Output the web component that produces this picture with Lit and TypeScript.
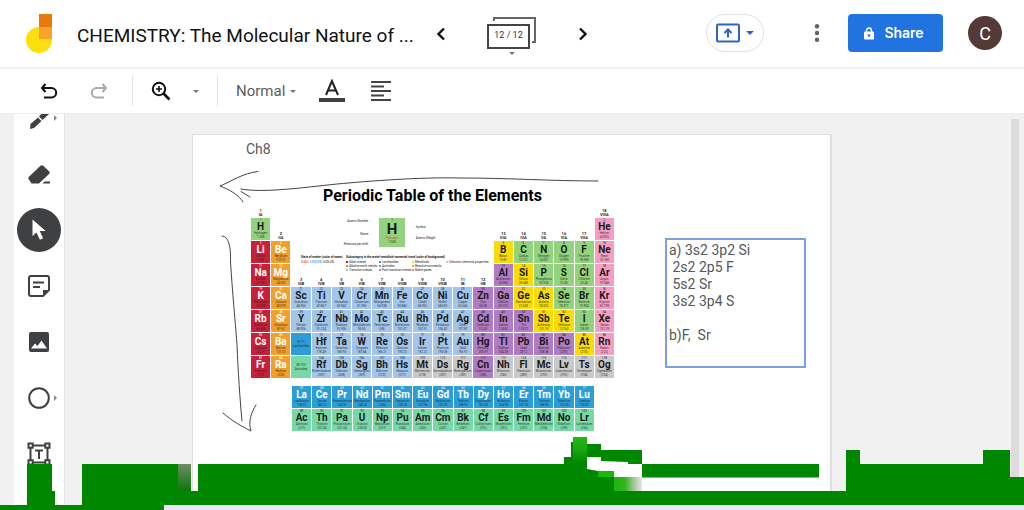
import { LitElement, html, css, svg, nothing } from "lit";
import { customElement } from "lit/decorators.js";

type El = { n: number; s: string; name: string; mass: string; cat: string };

// symbol,name,mass,category in order of atomic number
const DATA = `H,Hydrogen,1.008,n|He,Helium,4.0026,g|Li,Lithium,6.94,r|Be,Beryllium,9.0122,o|B,Boron,10.81,y|C,Carbon,12.011,n|N,Nitrogen,14.007,n|O,Oxygen,15.999,n|F,Fluorine,18.998,n|Ne,Neon,20.180,g|Na,Sodium,22.990,r|Mg,Magnesium,24.305,o|Al,Aluminium,26.982,p|Si,Silicon,28.085,y|P,Phosphorus,30.974,n|S,Sulfur,32.06,n|Cl,Chlorine,35.45,n|Ar,Argon,39.948,g|K,Potassium,39.098,r|Ca,Calcium,40.078,o|Sc,Scandium,44.956,t|Ti,Titanium,47.867,t|V,Vanadium,50.942,t|Cr,Chromium,51.996,t|Mn,Manganese,54.938,t|Fe,Iron,55.845,t|Co,Cobalt,58.933,t|Ni,Nickel,58.693,t|Cu,Copper,63.546,t|Zn,Zinc,65.38,p|Ga,Gallium,69.723,p|Ge,Germanium,72.630,y|As,Arsenic,74.922,y|Se,Selenium,78.971,n|Br,Bromine,79.904,n|Kr,Krypton,83.798,g|Rb,Rubidium,85.468,r|Sr,Strontium,87.62,o|Y,Yttrium,88.906,t|Zr,Zirconium,91.224,t|Nb,Niobium,92.906,t|Mo,Molybdenum,95.95,t|Tc,Technetium,(98),t|Ru,Ruthenium,101.07,t|Rh,Rhodium,102.91,t|Pd,Palladium,106.42,t|Ag,Silver,107.87,t|Cd,Cadmium,112.41,p|In,Indium,114.82,p|Sn,Tin,118.71,p|Sb,Antimony,121.76,y|Te,Tellurium,127.60,y|I,Iodine,126.90,n|Xe,Xenon,131.29,g|Cs,Caesium,132.91,r|Ba,Barium,137.33,o|La,Lanthanum,138.91,l|Ce,Cerium,140.12,l|Pr,Praseodymium,140.91,l|Nd,Neodymium,144.24,l|Pm,Promethium,(145),l|Sm,Samarium,150.36,l|Eu,Europium,151.96,l|Gd,Gadolinium,157.25,l|Tb,Terbium,158.93,l|Dy,Dysprosium,162.50,l|Ho,Holmium,164.93,l|Er,Erbium,167.26,l|Tm,Thulium,168.93,l|Yb,Ytterbium,173.05,l|Lu,Lutetium,174.97,l|Hf,Hafnium,178.49,t|Ta,Tantalum,180.95,t|W,Tungsten,183.84,t|Re,Rhenium,186.21,t|Os,Osmium,190.23,t|Ir,Iridium,192.22,t|Pt,Platinum,195.08,t|Au,Gold,196.97,t|Hg,Mercury,200.59,p|Tl,Thallium,204.38,p|Pb,Lead,207.2,p|Bi,Bismuth,208.98,p|Po,Polonium,(209),p|At,Astatine,(210),y|Rn,Radon,(222),g|Fr,Francium,(223),r|Ra,Radium,(226),o|Ac,Actinium,(227),a|Th,Thorium,232.04,a|Pa,Protactinium,231.04,a|U,Uranium,238.03,a|Np,Neptunium,(237),a|Pu,Plutonium,(244),a|Am,Americium,(243),a|Cm,Curium,(247),a|Bk,Berkelium,(247),a|Cf,Californium,(251),a|Es,Einsteinium,(252),a|Fm,Fermium,(257),a|Md,Mendelevium,(258),a|No,Nobelium,(259),a|Lr,Lawrencium,(266),a|Rf,Rutherfordium,(267),t|Db,Dubnium,(268),t|Sg,Seaborgium,(269),t|Bh,Bohrium,(270),t|Hs,Hassium,(277),t|Mt,Meitnerium,(278),u|Ds,Darmstadtium,(281),u|Rg,Roentgenium,(282),u|Cn,Copernicium,(285),p|Nh,Nihonium,(286),u|Fl,Flerovium,(289),u|Mc,Moscovium,(290),u|Lv,Livermorium,(293),u|Ts,Tennessine,(294),u|Og,Oganesson,(294),u`;

const ELEMENTS: El[] = DATA.split("|").map((row, i) => {
  const [s, name, mass, cat] = row.split(",");
  return { n: i + 1, s, name, mass, cat };
});

type Slot = El | "lan" | "act" | null;
const range = (a: number, b: number): El[] => ELEMENTS.slice(a - 1, b);
const blanks = (n: number): null[] => Array(n).fill(null);

const PERIODS: Slot[][] = [
  [...range(1, 1), ...blanks(16), ...range(2, 2)],
  [...range(3, 4), ...blanks(10), ...range(5, 10)],
  [...range(11, 12), ...blanks(10), ...range(13, 18)],
  range(19, 36),
  range(37, 54),
  [...range(55, 56), "lan", ...range(72, 86)],
  [...range(87, 88), "act", ...range(104, 118)],
];

const GROUPS = ["IA", "IIA", "IIIB", "IVB", "VB", "VIB", "VIIB", "VIIIB", "VIIIB", "VIIIB", "IB", "IIB", "IIIA", "IVA", "VA", "VIA", "VIIA", "VIIIA"];
// index of the blank row that carries each group's heading
const headRow = (col: number) => (col === 0 || col === 17 ? -1 : col === 1 || col >= 12 ? 0 : 2);

@customElement("periodic-table")
export class PeriodicTable extends LitElement {
  static styles = css`
    :host { display: block; position: relative; color: #1a1a1a; font-family: Roboto, "Liberation Sans", sans-serif; }
    h2 { margin: 0; text-align: center; font-size: 16px; line-height: 20px; font-weight: 700; color: #000; }
    table { border-collapse: separate; border-spacing: 1px; table-layout: fixed; width: 365px; }
    th, td { padding: 0; height: 22px; overflow: hidden; text-align: center; vertical-align: top; font-weight: 400; }
    thead th { height: 10px; vertical-align: bottom; }
    .series { width: 304px; margin: 6px 0 0 41px; }
    .group { vertical-align: bottom; font-size: 4px; line-height: 4px; font-weight: 700; }
    .group span, .cell span, .cell b { display: block; white-space: nowrap; }
    .num { font-size: 3px; line-height: 4px; }
    .sym { font-size: 10px; line-height: 9px; font-weight: 700; }
    .tiny { font-size: 3px; line-height: 4px; opacity: 0.85; }
    .r { background: #c9203a; color: #fff; }
    .o { background: #f1a02c; color: #fff; }
    .y { background: #f9da0a; }
    .n { background: #94d37e; }
    .g { background: #f49fc2; }
    .p { background: #b07cc4; }
    .t { background: #a2c5e9; }
    .u { background: #c9c9c9; }
    .l { background: #2b9dd7; color: #fff; }
    .a { background: #78d9a6; }
    .r .tiny, .o .tiny, .l .tiny { color: #222; }
    .range { vertical-align: middle; }
    .key { position: absolute; left: 96px; top: 32px; display: grid; grid-template-columns: 26px 26px 60px; column-gap: 7px; font-size: 3px; line-height: 6px; }
    .key .left { text-align: right; white-space: nowrap; display: flex; flex-direction: column; align-items: flex-end; justify-content: space-between; }
    .key .right { display: flex; flex-direction: column; justify-content: space-evenly; white-space: nowrap; }
    .sample { height: 29px; text-align: center; }
    .sample .sym { display: block; font-size: 15px; line-height: 14px; }
    .sample .num, .sample .tiny { display: block; }
    .sample .name { color: #d33; }
    .legend { position: absolute; left: 51px; top: 69px; display: grid; grid-template-columns: 45px 100px 60px; font-size: 4px; line-height: 4px; white-space: nowrap; }
    .legend b { display: block; line-height: 5px; overflow: hidden; font-size: 3px; }
    .cats { display: grid; grid-template-columns: repeat(3, 33px); font-size: 3px; }
    .cats span::before, .unknown::before { content: ""; display: inline-block; width: 2px; height: 2px; margin-right: 1px; background: var(--swatch, #c9c9c9); }
    .unknown { font-size: 3px; padding-top: 5px; }
    .gas { color: #d33; }
    .liquid { color: #27c; }
  `;

  private group(col: number) {
    return html`<span>${col + 1}</span><span>${GROUPS[col]}</span>`;
  }

  private cell(slot: Slot, row: number, col: number) {
    if (slot === "lan") return html`<td class="cell l range"><span class="tiny">57-71</span><span class="tiny">Lanthanides</span></td>`;
    if (slot === "act") return html`<td class="cell a range"><span class="tiny">89-103</span><span class="tiny">Actinides</span></td>`;
    if (!slot) return headRow(col) === row ? html`<th class="group" scope="col">${this.group(col)}</th>` : html`<td></td>`;
    return html`<td class="cell ${slot.cat}"><span class="num">${slot.n}</span><b class="sym">${slot.s}</b><span class="tiny">${slot.name}</span><span class="tiny">${slot.mass}</span></td>`;
  }

  render() {
    const cats: [string, string][] = [
      ["Alkali metals", "#c9203a"], ["Lanthanides", "#2b9dd7"], ["Metalloids", "#f9da0a"],
      ["Alkaline earth metals", "#f1802c"], ["Actinides", "#3cc9a6"], ["Reactive nonmetals", "#94d35e"],
      ["Transition metals", "#a2c5e9"], ["Post-transition metals", "#b07cc4"], ["Noble gases", "#f47f92"],
    ];
    return html`
      <h2>Periodic Table of the Elements</h2>
      <table aria-label="Main groups">
        <thead><tr>${GROUPS.map((_, c) => html`<th class="group" scope="col">${headRow(c) === -1 ? this.group(c) : nothing}</th>`)}</tr></thead>
        <tbody>${PERIODS.map((p, r) => html`<tr>${p.map((s, c) => this.cell(s, r, c))}</tr>`)}</tbody>
      </table>
      <table class="series" aria-label="Lanthanides and actinides">
        <tbody>${[range(57, 71), range(89, 103)].map((p) => html`<tr>${p.map((s, c) => this.cell(s, 9, c))}</tr>`)}</tbody>
      </table>
      <div class="key">
        <div class="left"><span>Atomic Number →</span><span></span><span>Name →</span><span>Electrons per shell →</span></div>
        <div class="sample n"><span class="num">1</span><b class="sym">H</b><span class="tiny name">Hydrogen</span><span class="tiny">1.008</span></div>
        <div class="right"><span>← Symbol</span><span>← Atomic Weight</span></div>
      </div>
      <div class="legend">
        <div><b>State of matter (color of name)</b><span class="gas">GAS</span> <span class="liquid">LIQUID</span> SOLID</div>
        <div><b>Subcategory in the metal-metalloid-nonmetal trend (color of background)</b>
          <div class="cats">${cats.map(([t, c]) => html`<span style="--swatch:${c}">${t}</span>`)}</div></div>
        <div class="unknown">Unknown chemical properties</div>
      </div>`;
  }
}

const caret = svg`<path d="M0 0h6l-3 3z" fill="currentColor"/>`;

@customElement("app-root")
export class AppRoot extends LitElement {
  static styles = css`
    :host { display: flex; flex-direction: column; height: 100vh; position: relative; overflow: hidden; background: #fff; font-family: Roboto, "Liberation Sans", sans-serif; color: #202124; }
    * { box-sizing: border-box; }
    button { border: 0; padding: 0; background: none; color: inherit; font: inherit; display: flex; align-items: center; justify-content: center; flex: none; }
    svg { display: block; flex: none; }
    header { flex: none; height: 69px; display: flex; align-items: center; padding: 0 22px 1px 26px; border-bottom: 2px solid #f0f0f1; }
    h1 { margin: 0 0 0 25px; padding-top: 5px; width: 340px; font-size: 19px; line-height: 24px; font-weight: 400; white-space: nowrap; color: #111; }
    .nav { width: 48px; height: 48px; padding-top: 2px; }
    .pages { width: 50px; height: 40px; position: relative; margin: 0 22px; padding-top: 4px; font-size: 9px; color: #333; }
    .pages svg { position: absolute; left: 0; top: 1px; overflow: visible; }
    .pages span { position: relative; padding-right: 7px; line-height: 10px; }
    .space { flex: 1; }
    .present { width: 58px; height: 38px; border: 1px solid #dfe1e5; border-radius: 19px; gap: 6px; color: #2a65c8; }
    .more { width: 48px; height: 40px; margin: 0 7px 0 29px; color: #5f6368; }
    .share { width: 95px; height: 38px; border-radius: 4px; background: #2173e0; color: #fff; gap: 10px; font: 600 14px/20px Inter, sans-serif; padding-right: 3px; }
    .avatar { width: 34px; height: 34px; border-radius: 50%; background: #543a37; color: #fff; font-size: 18px; margin-left: 25px; }
    .toolbar { flex: none; height: 45px; display: flex; align-items: center; padding-left: 31px; border-bottom: 1px solid #ececec; color: #3c4043; }
    .tb { width: 36px; height: 36px; }
    .redo { margin-left: 14px; color: #aaa; }
    .rule { width: 1px; height: 30px; background: #e2e2e2; }
    .rule.first { margin: 0 10px 0 15px; }
    .rule.second { margin: 0 18px 0 13px; }
    .small { width: 16px; height: 24px; margin-left: 9px; color: #777; }
    .style { display: flex; align-items: center; color: #777; margin-right: 18px; }
    select { appearance: none; border: 0; padding: 0; margin: 0; background: none; font: 15px/20px Roboto, sans-serif; color: #5a5d61; width: 54px; }
    .align { margin-left: 13px; }
    main { flex: 1; min-height: 0; display: flex; background: #f1f1f1; padding-left: 14px; overflow: hidden; }
    .rail { flex: none; width: 51px; background: #fff; border-right: 1px solid #e4e4e4; display: flex; flex-direction: column; gap: 12px; align-items: center; overflow: hidden; color: #3f4042; }
    .rail button { width: 44px; height: 44px; position: relative; }
    .rail button:first-child { margin-top: -18px; }
    .rail .on { background: #3f4042; border-radius: 50%; color: #fff; }
    .rail .fly { position: absolute; right: 4px; top: 19px; color: #888; }
    .board { flex: 1; margin: 20px 179px 0 127px; background: #fff; border: 1px solid #e0e0e0; border-width: 1px 2px 0 1px; position: relative; }
    .note { position: absolute; left: 53px; top: 4px; margin: 0; font-size: 14px; line-height: 20px; color: #55585c; }
    .chart { position: absolute; left: 57px; top: 51px; width: 365px; }
    textarea { position: absolute; left: 472px; top: 103px; width: 141px; height: 130px; border: 2px solid #7f9fe0; border-radius: 0; resize: none; outline: 0; padding: 2px; background: none; font: 14px/17px Roboto, sans-serif; color: #55585c; overflow: hidden; }
    .ink { position: absolute; left: 0; top: 0; overflow: visible; }
    .scroll { flex: none; width: 8px; margin: 5px 5px 0 0; background: #dcdcdc; }
    .foot { flex: none; height: 5px; background: #e8eaf2; }
    .glitch { position: absolute; left: 0; bottom: 0; width: 100%; height: 80px; pointer-events: none; }
  `;

  render() {
    return html`
      <header>
        <svg width="26" height="40" viewBox="0 0 26 40" role="img" aria-label="Jamboard"><path d="M13 14a13 13 0 1 0 13 13V14z" fill="#fbe00f"/><path d="M13 1h13v13H13z" fill="#e8790c"/><path d="M13 14h13v12H13z" fill="#f5a52a"/></svg>
        <h1>CHEMISTRY: The Molecular Nature of ...</h1>
        <button class="nav" aria-label="Previous frame"><svg width="10" height="14" viewBox="0 0 10 14" fill="none" stroke="#111" stroke-width="2.4"><path d="M8 1.500 2.500 7 8 12.500"/></svg></button>
        <button class="pages"><svg width="50" height="40" fill="none" stroke="#444" stroke-width="2"><path d="M1 11h41v23H1z"/><path d="M7 7V4h41v24h-3" stroke="#666"/><path d="M22 38h6l-3 3z" fill="#777" stroke="none"/></svg><span>12 / 12</span></button>
        <button class="nav" aria-label="Next frame"><svg width="10" height="14" viewBox="0 0 10 14" fill="none" stroke="#111" stroke-width="2.400"><path d="M2 1.500 7.500 7 2 12.500"/></svg></button>
        <div class="space"></div>
        <button class="present" aria-label="Open on a Jamboard"><svg width="24" height="20" viewBox="0 0 24 20" fill="none" stroke="currentColor" stroke-width="2"><rect x="1" y="1.500" width="22" height="17" rx="1"/><path d="M12 14.500V7M8.500 10 12 6.500l3.500 3.500"/></svg><svg width="8" height="4" viewBox="0 0 8 4"><path d="M0 0h8L4 4z" fill="currentColor"/></svg></button>
        <button class="more" aria-label="More actions"><svg width="6" height="18" viewBox="0 0 6 18" fill="currentColor"><circle cx="3" cy="2.300" r="2.200"/><circle cx="3" cy="9" r="2.200"/><circle cx="3" cy="15.700" r="2.200"/></svg></button>
        <button class="share"><svg width="10" height="13" viewBox="0 0 10 13"><path d="M2.500 5V3.500a2.500 2.500 0 0 1 5 0V5" fill="none" stroke="#fff" stroke-width="1.400"/><rect y="4.500" width="10" height="8" rx="1" fill="#fff"/><circle cx="5" cy="8.500" r="1.300" fill="#2173e0"/></svg>Share</button>
        <button class="avatar" aria-label="Account C">C</button>
      </header>
      <div class="toolbar">
        <button class="tb" aria-label="Undo"><svg width="18" height="16" viewBox="0 0 18 16" fill="none" stroke="#111" stroke-width="2"><path d="M5.500 1 2 5l3.500 4M2 5h9.500a4.700 4.700 0 0 1 0 9.400H4"/></svg></button>
        <button class="tb redo" aria-label="Redo"><svg width="18" height="16" viewBox="0 0 18 16" fill="none" stroke="currentColor" stroke-width="2"><path d="M12.500 1 16 5l-3.500 4M16 5H6.500a4.700 4.700 0 0 0 0 9.400H14"/></svg></button>
        <div class="rule first"></div>
        <button class="tb" aria-label="Zoom"><svg width="20" height="20" viewBox="0 0 20 20" fill="none" stroke="#111"><circle cx="8" cy="8" r="6.200" stroke-width="2"/><path d="m12.500 12.500 6 6" stroke-width="2.600"/><path d="M8 5v6M5 8h6" stroke-width="1.600"/></svg></button>
        <button class="small" aria-label="Zoom level"><svg width="6" height="3">${caret}</svg></button>
        <div class="rule second"></div>
        <label class="style"><select aria-label="Text style"><option>Normal</option></select><svg width="6" height="3">${caret}</svg></label>
        <button class="tb" aria-label="Text color"><svg width="26" height="24" viewBox="0 0 26 24"><path d="M7 16 12.900 2 19 16M9 11.500h8" fill="none" stroke="#222" stroke-width="2"/><path d="M0 19h26v4H0z" fill="#3c4043"/></svg></button>
        <button class="tb align" aria-label="Align"><svg width="20" height="20" viewBox="0 0 20 20" stroke="#444" stroke-width="2"><path d="M0 1h20M0 5.500h13M0 10h20M0 14.500h13M0 19h20"/></svg></button>
      </div>
      <main>
        <nav class="rail" aria-label="Drawing tools">
          <button aria-label="Pen"><svg width="22" height="22" viewBox="0 0 22 22" fill="currentColor"><path d="m2 22 .5-5 7.500-6.500 3.500 3.500L6 21z"/><path d="M11 9.500 17 3l4 4-6.500 6z"/></svg><svg class="fly" width="3" height="6"><path d="M0 0v6l3-3z" fill="currentColor"/></svg></button>
          <button aria-label="Erase"><svg width="22" height="19" viewBox="0 0 22 19" fill="currentColor"><path d="M12.500.8 1.200 11.500q-1.500 1.500-.3 3L3.500 18.500h7.500L21.300 8.700q1-1-.1-2.200L15.300.8q-1.400-1-2.800 0z"/><path d="m14.500 18.500 2-2H22v2z"/></svg></button>
          <button class="on" aria-label="Select"><svg width="14" height="22" viewBox="0 0 14 22" fill="currentColor"><path d="M.5.500v16.500l4-3.600 3.400 7.300 3.200-1.500-3.400-7.100h6z"/></svg></button>
          <button aria-label="Sticky note"><svg width="22" height="22" viewBox="0 0 22 22"><path d="M3 1h16q2 0 2 2v12l-6 6H3q-2 0-2-2V3q0-2 2-2z" fill="none" stroke="currentColor" stroke-width="2"/><path d="M15 21v-6h6zM5 6.500h11v2H5zM5 11h7v2H5z" fill="currentColor"/></svg></button>
          <button aria-label="Add image"><svg width="20" height="20" viewBox="0 0 20 20"><rect width="20" height="20" rx="2" fill="currentColor"/><path d="m2 16.500 4-5 2.500 2.500 4-5.500 5.500 8z" fill="#fff"/></svg></button>
          <button aria-label="Shape"><svg width="22" height="22"><circle cx="11" cy="11" r="9.800" fill="none" stroke="currentColor" stroke-width="2"/></svg><svg class="fly" width="3" height="6"><path d="M0 0v6l3-3z" fill="currentColor"/></svg></button>
          <button aria-label="Text box"><svg width="24" height="24" viewBox="0 0 24 24" fill="none" stroke="currentColor" stroke-width="2"><path d="M6 3.500h12M6 20.500h12M3.500 6v12M20.500 6v12M1.500 1.500h4.200v4.200H1.500zM18.300 1.500h4.200v4.200h-4.200zM1.500 18.300h4.200v4.200H1.500zM18.300 18.300h4.200v4.200h-4.200zM8 8.500h8M12 8.500V17"/></svg></button>
        </nav>
        <section class="board" aria-label="Frame 12">
          <p class="note">Ch8</p>
          <periodic-table class="chart"></periodic-table>
          <svg class="ink" width="638" height="320" viewBox="193 135 638 320" fill="none" stroke="#444" stroke-width="1" stroke-linecap="round" stroke-linejoin="round" aria-hidden="true">
            <path d="M598 181C550 181 510 178 460 178C420 177 370 181 337 184C300 188 262 193 241 189"/>
            <path d="M258 171.500C243 173 230 182 220 186C230 190 239 195 243 202M241 191.500 250 197"/>
            <path d="M222 236C229 236 231 248 230.500 262C233 300 236 330 237 345C238 370 240 400 242 421"/>
            <path d="M223 413C232 421 241 426 251 431C248 422 251 413 256 405"/>
          </svg>
          <textarea aria-label="Answers" spellcheck="false" .value=${"a) 3s2 3p2 Si\n 2s2 2p5 F\n 5s2 Sr\n 3s2 3p4 S\n\nb)F,  Sr"}></textarea>
        </section>
        <div class="scroll"></div>
      </main>
      <div class="foot"></div>
      <svg class="glitch" viewBox="0 430 1024 80" preserveAspectRatio="none" aria-hidden="true">
        <defs>
          <linearGradient id="a" x2="0" y2="1"><stop offset="0" stop-color="#6d8b66"/><stop offset="1" stop-color="#087a06"/></linearGradient>
          <linearGradient id="b"><stop offset="0" stop-color="#18b808"/><stop offset=".4" stop-color="#35b51f"/><stop offset=".7" stop-color="#a3c49a"/><stop offset="1" stop-color="#e3e8e1"/></linearGradient>
          <linearGradient id="c" x2="0" y2="1"><stop offset="0" stop-color="#22b814"/><stop offset=".5" stop-color="#18a80c"/><stop offset="1" stop-color="#008700"/></linearGradient>
        </defs>
        <path fill="#008700" d="M0 505H27V464H52V491H55V505H82V464H191V491H198V464H564V457H571V442H573V437H587V444H601V450H642V464H819V477.500H642V464H628V462L601 461V457H587V469L598 471L614 472V491H846V450H860V464H983V450H1010V477H1024V505H164V510H0z"/>
        <path fill="url(#a)" d="M178 464h13v27h-13z"/>
        <path fill="url(#b)" d="M614 477h28v14h-28z"/>
        <path fill="url(#c)" d="M573 437h14v26h-14z"/>
        <path fill="#18b808" d="M598 471h16v6h-16z"/>
      </svg>`;
  }
}
